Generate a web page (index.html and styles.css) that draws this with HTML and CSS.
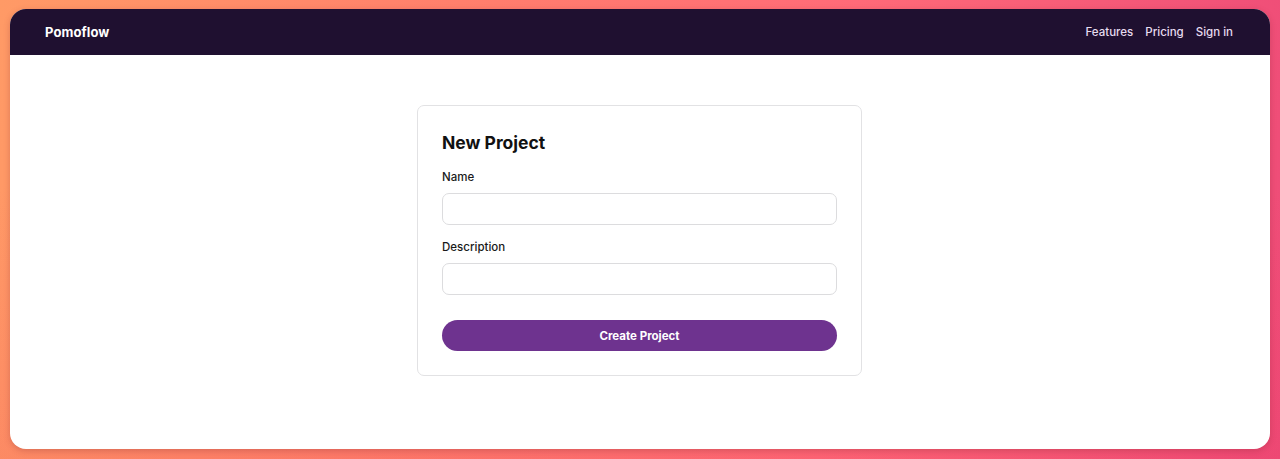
FILE: index.html
```html
<!DOCTYPE html>
<html lang="en">
<head>
    <meta charset="UTF-8">
    <title>Pomoflow - New Project</title>
    <link rel="stylesheet" href="styles.css">
</head>
<body>
    <div class="window">
        <header class="topbar">
            <a class="logo" href="#">Pomoflow</a>
            <nav class="nav">
                <a href="#">Features</a>
                <a href="#">Pricing</a>
                <a href="#">Sign in</a>
            </nav>
        </header>
        <main class="content">
            <form class="card">
                <h1 class="card-title">New Project</h1>
                <label class="field">
                    <span class="field-label">Name</span>
                    <input class="field-input" type="text">
                </label>
                <label class="field">
                    <span class="field-label">Description</span>
                    <input class="field-input" type="text">
                </label>
                <button class="btn-primary" type="button">Create Project</button>
            </form>
        </main>
    </div>
</body>
</html>
```

FILE: styles.css
```css
*{
    margin: 0;
    padding: 0;
    box-sizing: border-box;
}
html,body{
    height: 100%;
}
body{
    padding: 9px 10px 10px;
    font-family: Inter, "Liberation Sans", sans-serif;
    background:
        linear-gradient(180deg, rgba(255,255,255,0) 40%, rgba(232,40,80,0.12) 100%),
        linear-gradient(95deg, #ff9a66 0%, #ff7f6c 35%, #ff6a78 65%, #ee4c78 100%);
    overflow: hidden;
}
.window{
    height: 440px;
    background: #ffffff;
    border-radius: 16px;
    overflow: hidden;
    display: flex;
    flex-direction: column;
    box-shadow: 0 2px 6px rgba(120, 30, 40, 0.25);
}
.topbar{
    height: 46px;
    flex-shrink: 0;
    background: #1f1030;
    display: flex;
    align-items: center;
    justify-content: space-between;
    padding: 0 37px 0 35px;
}
.logo{
    color: #ffffff;
    font-weight: 700;
    font-size: 13px;
    text-decoration: none;
    letter-spacing: 0.1px;
}
.nav{
    display: flex;
    gap: 12px;
}
.nav a{
    color: #e6dcef;
    font-size: 11.5px;
    font-weight: 500;
    text-decoration: none;
}
.content{
    flex: 1;
    display: flex;
    justify-content: center;
    padding: 50px 1px 0 0;
}
.card{
    width: 445px;
    height: 271px;
    border: 1px solid #e2e2e4;
    border-radius: 7px;
    padding: 26px 24px 0;
    display: flex;
    flex-direction: column;
}
.card-title{
    font-size: 17.5px;
    font-weight: 700;
    color: #111111;
    line-height: 22px;
    margin-bottom: 15px;
}
.field{
    display: flex;
    flex-direction: column;
    gap: 8px;
    margin-bottom: 14px;
}
.field-label{
    font-size: 11.5px;
    font-weight: 500;
    color: #1a1a1a;
    line-height: 16px;
}
.field-input{
    height: 32px;
    border: 1px solid #dcdcde;
    border-radius: 7px;
    background: #ffffff;
    font-family: inherit;
    font-size: 13px;
    padding: 0 10px;
    outline: none;
}
.btn-primary{
    margin-top: 11px;
    height: 31px;
    border: none;
    border-radius: 16px;
    background: #6e338f;
    color: #ffffff;
    font-family: inherit;
    font-size: 11.5px;
    font-weight: 700;
    cursor: pointer;
}
```
